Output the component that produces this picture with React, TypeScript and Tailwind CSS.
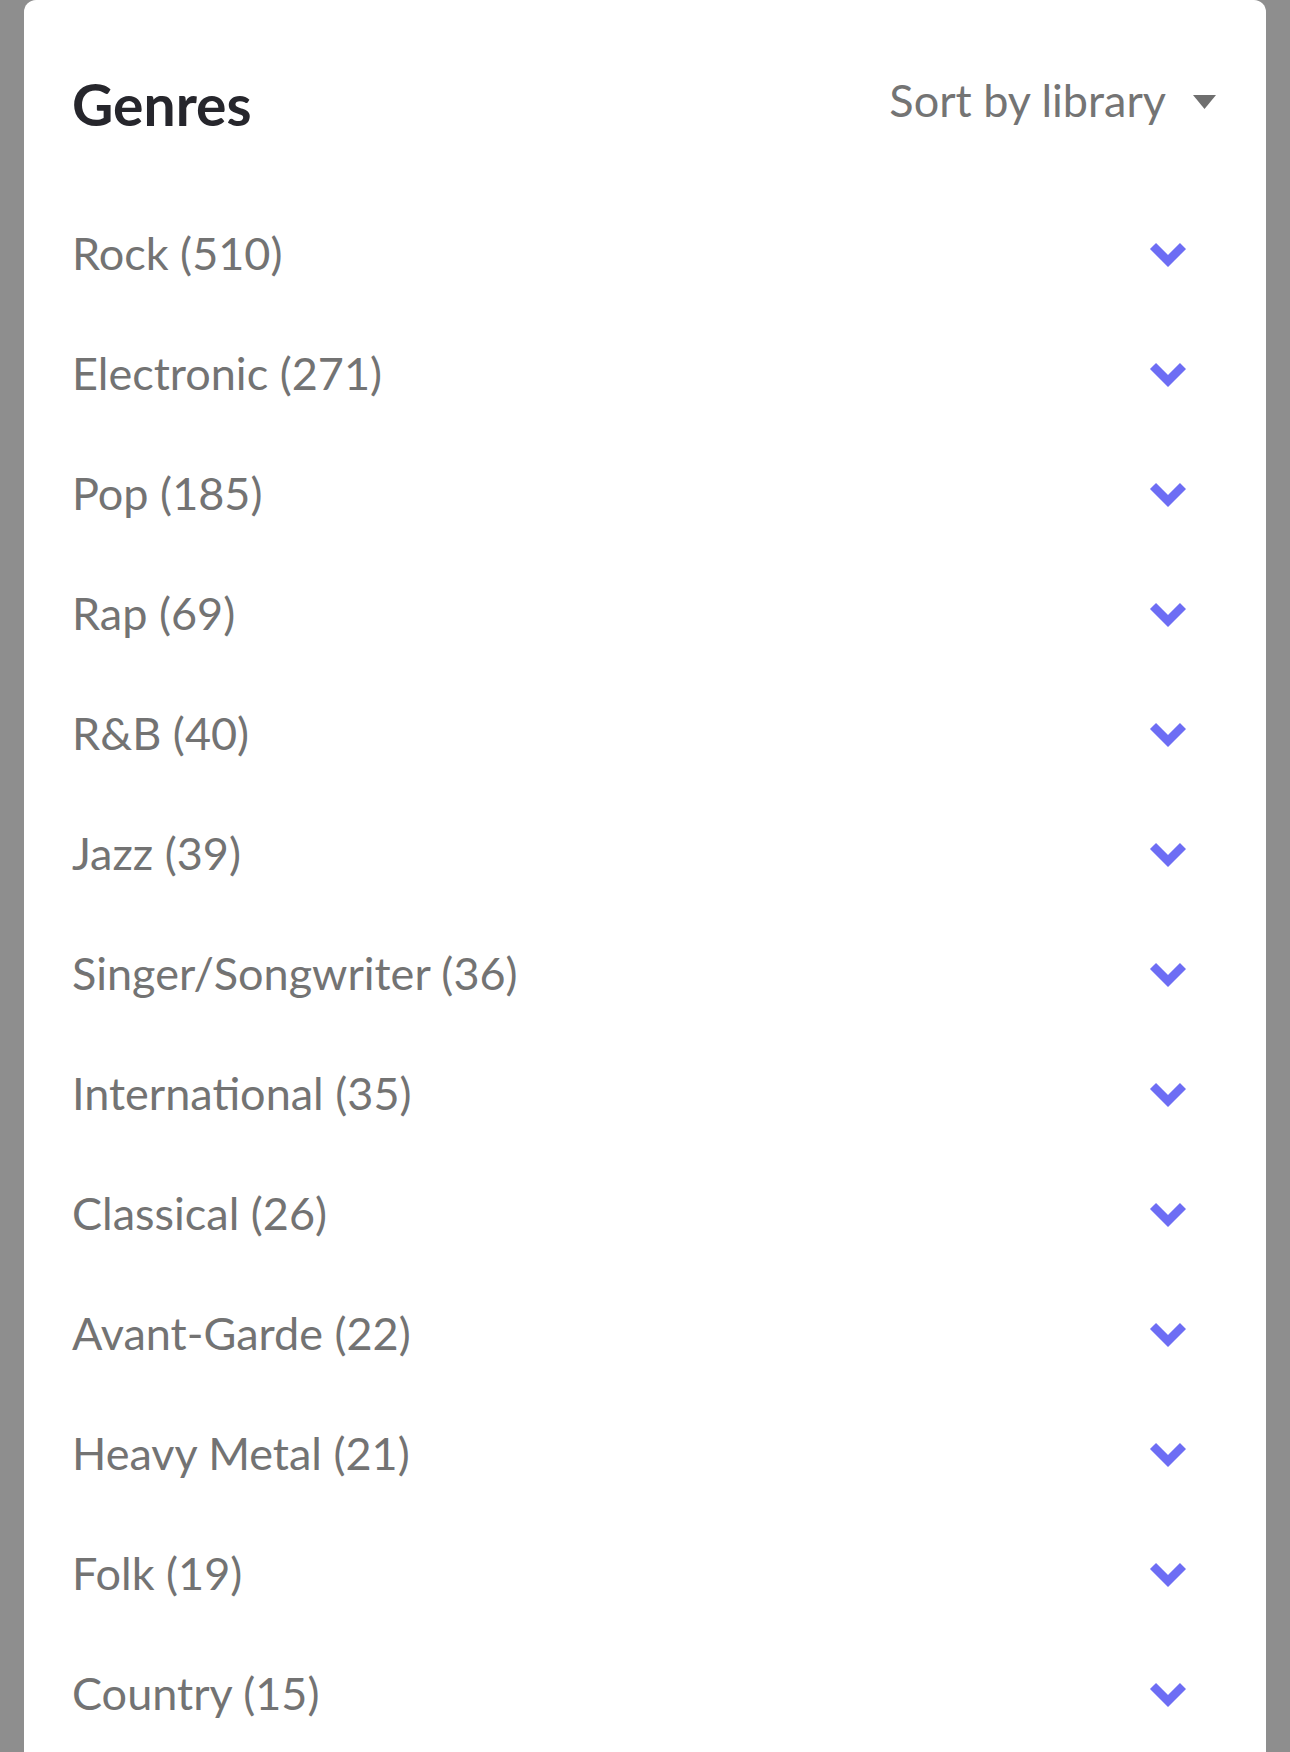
import React from 'react';

const genres = [
  { name: 'Rock', count: 510 },
  { name: 'Electronic', count: 271 },
  { name: 'Pop', count: 185 },
  { name: 'Rap', count: 69 },
  { name: 'R&B', count: 40 },
  { name: 'Jazz', count: 39 },
  { name: 'Singer/Songwriter', count: 36 },
  { name: 'International', count: 35 },
  { name: 'Classical', count: 26 },
  { name: 'Avant-Garde', count: 22 },
  { name: 'Heavy Metal', count: 21 },
  { name: 'Folk', count: 19 },
  { name: 'Country', count: 15 },
];

const Chevron = () => (
  <svg width="40" height="26" viewBox="0 0 40 26" fill="none">
    <polyline
      points="5,5 20,20 35,5"
      stroke="#6d6df4"
      strokeWidth="8.5"
      strokeLinecap="butt"
      strokeLinejoin="miter"
    />
  </svg>
);

const App = () => {
  return (
    <div className="h-[1752px] overflow-hidden bg-[#8e8e8e] px-[24px] font-['Lato','Liberation_Sans',sans-serif]">
      <div className="h-full bg-white rounded-t-[12px] px-[48px]">
        {/* header */}
        <div className="h-[194px] flex items-start justify-between pt-[68px]">
          <h1 className="text-[57px] leading-[72px] font-bold text-[#26262c]">Genres</h1>
          <button className="flex items-center gap-[27px] text-[45px] leading-[56px] text-[#747474] mt-[4px]">
            <span>Sort by library</span>
            <svg width="23" height="14" viewBox="0 0 23 14" className="mr-[2px] mt-[4px]">
              <polygon points="0,0 23,0 11.5,14" fill="#6f6f6f" />
            </svg>
          </button>
        </div>

        {/* genre rows */}
        <ul>
          {genres.map((g) => (
            <li key={g.name} className="h-[120px] flex items-center justify-between">
              <span className="text-[45px] text-[#737373]">
                {g.name} ({g.count})
              </span>
              <span className="mr-[30px] flex items-center">
                <Chevron />
              </span>
            </li>
          ))}
        </ul>
      </div>
    </div>
  );
};

export default App;
